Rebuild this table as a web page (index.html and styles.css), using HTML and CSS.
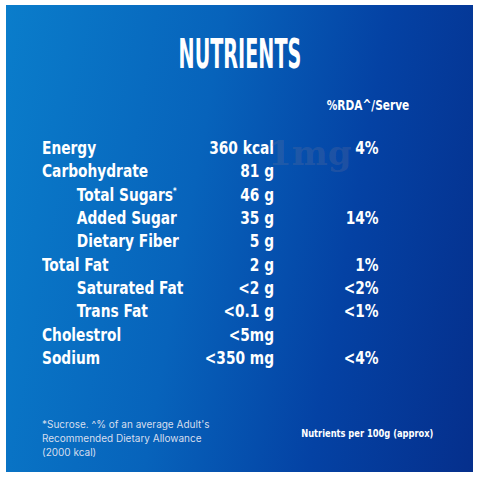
FILE: index.html
```html
<!DOCTYPE html>
<html lang="en">
<head>
  <meta charset="UTF-8" />
  <title>Nutrients</title>
  <link rel="stylesheet" href="styles.css">
</head>
<body>
  <div class="panel">
    <h1 class="title"><span>NUTRIENTS</span></h1>
    <div class="rda-head"><span>%RDA^/Serve</span></div>

    <div class="facts">
      <div class="name">Energy</div><div class="val">360 kcal</div><div class="pct">4%</div>
      <div class="name">Carbohydrate</div><div class="val">81 g</div><div class="pct"></div>
      <div class="name sub">Total Sugars<sup>*</sup></div><div class="val">46 g</div><div class="pct"></div>
      <div class="name sub">Added Sugar</div><div class="val">35 g</div><div class="pct">14%</div>
      <div class="name sub">Dietary Fiber</div><div class="val">5 g</div><div class="pct"></div>
      <div class="name">Total Fat</div><div class="val">2 g</div><div class="pct">1%</div>
      <div class="name sub">Saturated Fat</div><div class="val">&lt;2 g</div><div class="pct">&lt;2%</div>
      <div class="name sub">Trans Fat</div><div class="val">&lt;0.1 g</div><div class="pct">&lt;1%</div>
      <div class="name">Cholestrol</div><div class="val">&lt;5mg</div><div class="pct"></div>
      <div class="name">Sodium</div><div class="val">&lt;350 mg</div><div class="pct">&lt;4%</div>
    </div>

    <div class="foot">
      <p class="note">*Sucrose. ^% of an average Adult's Recommended Dietary Allowance (2000 kcal)</p>
      <p class="per"><span>Nutrients per 100g (approx)</span></p>
    </div>

    <span class="mark">1mg</span>
  </div>
</body>
</html>
```

FILE: styles.css
```css
* {
  box-sizing: border-box;
  margin: 0;
  padding: 0;
}
body {
  background: #fff;
  width: 480px;
  height: 480px;
  padding: 5px 7px 8px 6px;
}
.panel {
  position: relative;
  height: 467px;
  background: linear-gradient(100deg, #0a7dcb 0%, #0763bb 40%, #0442a4 70%, #052f8c 100%);
  color: #fff;
  font-family: "DejaVu Sans Condensed", "DejaVu Sans", sans-serif;
  font-weight: bold;
  padding: 28px 64px 0 36px;
  white-space: nowrap;
}

/* the artwork uses a very narrow display face, so squeeze the text */
.title {
  text-align: center;
  font-size: 41px;
  line-height: 42px;
  padding-left: 28px;
}
.title span {
  display: inline-block;
  transform: scaleX(0.52);
}
.rda-head {
  text-align: right;
  font-size: 14px;
  margin-top: 22px;
}
.rda-head span {
  display: inline-block;
  transform: scaleX(0.84);
  transform-origin: right center;
}
.facts {
  display: grid;
  grid-template-columns: 188px 85px 123px;
  grid-auto-rows: 23.3px;
  margin-top: 23px;
  font-size: 18px;
  align-items: center;
  transform: scaleX(0.85);
  transform-origin: 0 0;
}
.name.sub {
  padding-left: 41px;
}
.name sup {
  font-size: 9px;
  vertical-align: 7px;
}
.val, .pct {
  text-align: right;
}
.foot {
  display: flex;
  justify-content: space-between;
  align-items: center;
  margin-top: 48px;
}
.note {
  width: 180px;
  white-space: normal;
  font-family: Inter, "Liberation Sans", sans-serif;
  font-weight: normal;
  font-size: 10px;
  line-height: 14px;
  color: #d6deee;
}
.per {
  font-size: 11px;
  margin-right: -24px;
  margin-bottom: 9px;
}
.per span {
  display: inline-block;
  transform: scaleX(0.84);
  transform-origin: right center;
}
.mark {
  position: absolute;
  left: 262px;
  top: 128px;
  font-family: "DejaVu Serif", serif;
  font-size: 34px;
  color: rgba(120, 120, 150, 0.24);
}
```
